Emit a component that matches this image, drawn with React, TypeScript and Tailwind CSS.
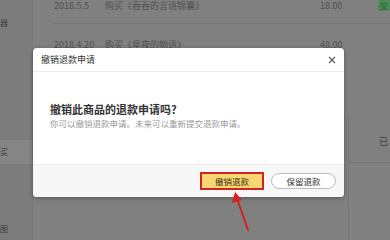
import React from "react";

const font = { fontFamily: '"Noto Sans CJK SC", "Noto Sans", sans-serif' };

export default function App() {
  return (
    <div className="relative w-[390px] h-[240px] overflow-hidden bg-[#808080]" style={font}>
      <div className="flex h-full">
        <div className="w-[34px] h-full bg-[#7c7c7c] border-r border-[#777] flex flex-col text-[8px] text-[#3a3a3a]">
          <div className="h-[16px]" />
          <div className="h-[14px] flex items-center">器</div>
          <div className="h-[110px]" />
          <div className="h-[24px] w-full bg-[#858585] flex items-center">买</div>
          <div className="h-[58px]" />
          <div className="h-[14px] flex items-center">图</div>
        </div>
        <div className="flex-1 flex">
          <div className="flex-1 pl-[20px]">
            <div className="mt-[-13px]">
              <div className="flex items-center h-[37px] border-b border-[#767676] text-[9px] leading-[9px] text-[#505050]">
                <div className="w-[52px] pl-[1px]">2018.5.5</div>
                <div className="w-[215px]">购买《吞吞的言语锦囊》</div>
                <div className="w-[56px]">18.00</div>
                <div className="flex-1">
                  <span className="ml-[2px] px-[2px] rounded-[3px] bg-[#4a8a55] text-[#2d5e35] text-[8px]">交</span>
                </div>
              </div>
              <div className="flex items-center h-[41px] text-[9px] text-[#505050]">
                <div className="w-[52px] pl-[1px]">2018.4.20</div>
                <div className="w-[215px]">购买《星夜的物语》</div>
                <div className="w-[56px]">48.00</div>
              </div>
            </div>
            <div className="flex mt-[50px]">
              <div className="flex-1" />
              <div className="w-[42px] border-l border-[#767676] h-[160px] flex flex-col">
                <div className="h-[20px]" />
                <div className="h-[28px] border-b border-[#767676] pl-[30px] text-[9px] text-[#404040] whitespace-nowrap overflow-hidden">已</div>
              </div>
            </div>
          </div>
        </div>
      </div>

      {/* Modal */}
      <div className="absolute left-[33px] top-[48px] w-[311px] h-[149px] bg-white rounded-[4px] shadow-[0_1px_4px_rgba(0,0,0,0.35)] flex flex-col overflow-hidden">
        <div className="h-[24px] flex items-center justify-between pl-[8px] pr-[8px] border-b border-[#ececec]">
          <span className="text-[9px] text-[#333] leading-none">撤销退款申请</span>
          <svg width="8" height="8" viewBox="0 0 8 8">
            <path d="M1 1L7 7M7 1L1 7" stroke="#555" strokeWidth="1.1" />
          </svg>
        </div>
        <div className="flex-1 pl-[17px] pt-[30px]">
          <div className="text-[11px] font-bold text-[#333] leading-[14px]">撤销此商品的退款申请吗?</div>
          <div className="text-[8.5px] text-[#9a9a9a] leading-[12px] mt-[1px]">你可以撤销退款申请。未来可以重新提交退款申请。</div>
        </div>
        <div className="h-[33px] bg-[#f7f7f7] border-t border-[#ededed] flex items-center justify-end pr-[8px] gap-[7px]">
          <div className="w-[64px] h-[18px] border-[2px] border-[#d42222] bg-[#f6d873] flex items-center justify-center text-[8.5px] text-[#3a2a10]">
            撤销退款
          </div>
          <div className="w-[65px] h-[16px] rounded-full border border-[#bdbdbd] bg-white flex items-center justify-center text-[8.5px] text-[#333]">
            保留退款
          </div>
        </div>
      </div>

      {/* Arrow */}
      <svg className="absolute left-0 top-0" width="390" height="240" viewBox="0 0 390 240">
        <line x1="248" y1="230" x2="237.5" y2="200" stroke="#d42020" strokeWidth="2" strokeLinecap="round" />
        <polygon points="235,192 232,203 242,200" fill="#d42020" />
      </svg>
    </div>
  );
}
